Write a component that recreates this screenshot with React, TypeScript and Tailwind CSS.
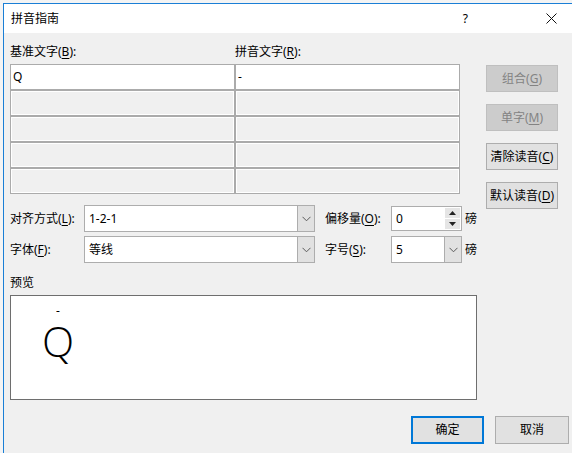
import React from 'react';

const font = { fontFamily: '"Noto Sans", "Noto Sans CJK SC", sans-serif' };

function Chevron() {
  return (
    <svg width="9" height="6" viewBox="0 0 9 6" className="block">
      <path d="M0.5 0.8 L4.5 4.8 L8.5 0.8" fill="none" stroke="#5a5a5a" strokeWidth="1" />
    </svg>
  );
}

function Combo({ value, width }: { value: string; width: string }) {
  return (
    <div className={`flex h-[27px] ${width} border border-[#adadad] bg-white`}>
      <div className="flex flex-1 items-center pl-[4px] text-[12px] text-black">{value}</div>
      <div className="flex w-[17px] items-center justify-center border-l border-[#adadad] bg-[#e1e1e1]">
        <Chevron />
      </div>
    </div>
  );
}

function Btn({ label, mn, disabled }: { label: string; mn: string; disabled?: boolean }) {
  return (
    <div
      className={`flex h-[27px] w-[72px] items-center justify-center border text-[12px] ${
        disabled ? 'border-[#bfbfbf] bg-[#cccccc] text-[#838383]' : 'border-[#adadad] bg-[#e1e1e1] text-black'
      }`}
    >
      {label}(<span className="underline underline-offset-2">{mn}</span>)
    </div>
  );
}

function Cell({ first, text }: { first?: boolean; text?: string }) {
  return (
    <div className="h-[26px] border border-[#ababab]">
      <div
        className={`flex h-full items-center border border-white pl-[1px] text-[12px] text-black ${
          first ? 'bg-white' : 'bg-[#f0f0f0]'
        }`}
      >
        {text}
      </div>
    </div>
  );
}

export default function App() {
  return (
    <div className="h-[453px] w-[572px] overflow-hidden bg-[#f4f4f4] pl-[3px] pt-[3px]" style={font}>
      <div className="flex h-[450px] flex-col border-l border-t border-[#1a7fd6]">
        {/* Title bar */}
        <div className="flex h-[29px] shrink-0 items-center bg-white pl-[7px] text-[12px] text-black">
          <span>拼音指南</span>
          <span className="ml-auto mr-[78px]">?</span>
          <svg width="11" height="11" viewBox="0 0 11 11" className="mr-[15px]">
            <path d="M0.5 0.5 L10.5 10.5 M10.5 0.5 L0.5 10.5" stroke="#111" strokeWidth="1" />
          </svg>
        </div>

        {/* Body */}
        <div className="flex flex-1 flex-col bg-[#f0f0f0] pl-[6px] pt-[11px] text-[12px] text-black">
          <div className="flex h-[150px] items-start">
            <div className="flex w-[450px] flex-col">
              <div className="flex h-[16px] items-center">
                <span className="w-[225px]">
                  基准文字(<span className="underline underline-offset-2">B</span>):
                </span>
                <span>
                  拼音文字(<span className="underline underline-offset-2">R</span>):
                </span>
              </div>
              <div className="mt-[4px] grid grid-cols-2">
                <Cell first text="Q" />
                <Cell first text="-" />
                <Cell />
                <Cell />
                <Cell />
                <Cell />
                <Cell />
                <Cell />
                <Cell />
                <Cell />
              </div>
            </div>
            <div className="ml-[26px] mt-[21px] flex flex-col gap-[12px]">
              <Btn label="组合" mn="G" disabled />
              <Btn label="单字" mn="M" disabled />
              <Btn label="清除读音" mn="C" />
              <Btn label="默认读音" mn="D" />
            </div>
          </div>

          {/* Options */}
          <div className="mt-[11px] flex flex-col gap-[4px]">
            <div className="flex items-center">
              <span className="w-[74px]">
                对齐方式(<span className="underline underline-offset-2">L</span>):
              </span>
              <Combo value="1-2-1" width="w-[231px]" />
              <span className="ml-[10px] w-[66px]">
                偏移量(<span className="underline underline-offset-2">O</span>):
              </span>
              <div className="flex h-[25px] w-[71px] border border-[#adadad] bg-white">
                <div className="flex flex-1 items-center pl-[4px]">0</div>
                <div className="flex w-[16px] flex-col gap-[1px] py-[1px] pr-[1px]">
                  <div className="flex flex-1 items-center justify-center bg-[#e5e5e5]">
                    <svg width="7" height="4" viewBox="0 0 7 4">
                      <path d="M0 4 L3.5 0 L7 4 Z" fill="#222" />
                    </svg>
                  </div>
                  <div className="flex flex-1 items-center justify-center bg-[#e5e5e5]">
                    <svg width="7" height="4" viewBox="0 0 7 4">
                      <path d="M0 0 L3.5 4 L7 0 Z" fill="#222" />
                    </svg>
                  </div>
                </div>
              </div>
              <span className="ml-[3px]">磅</span>
            </div>
            <div className="flex items-center">
              <span className="w-[74px]">
                字体(<span className="underline underline-offset-2">F</span>):
              </span>
              <Combo value="等线" width="w-[231px]" />
              <span className="ml-[10px] w-[66px]">
                字号(<span className="underline underline-offset-2">S</span>):
              </span>
              <Combo value="5" width="w-[71px]" />
              <span className="ml-[3px]">磅</span>
            </div>
          </div>

          {/* Preview */}
          <div className="mt-[12px] flex h-[16px] items-center">预览</div>
          <div className="mt-[4px] h-[105px] w-[467px] border border-[#6e6e6e] bg-white pl-[31px] pt-[9px]">
            <div className="flex w-[32px] flex-col items-center">
              <span className="h-[12px] text-[12px] leading-[12px]">-</span>
              <span
                className="mt-[3px] h-[42px] text-[42px] font-light leading-none"
                style={{ fontFamily: '"Open Sans", "Noto Sans", sans-serif' }}
              >
                Q
              </span>
            </div>
          </div>

          {/* Footer */}
          <div className="mt-[16px] flex justify-end gap-[11px] pr-[3px]">
            <div className="flex h-[28px] w-[73px] items-center justify-center border-2 border-[#0078d7] bg-[#e1e1e1]">
              确定
            </div>
            <div className="flex h-[28px] w-[74px] items-center justify-center border border-[#adadad] bg-[#e1e1e1]">
              取消
            </div>
          </div>
        </div>
      </div>
    </div>
  );
}
